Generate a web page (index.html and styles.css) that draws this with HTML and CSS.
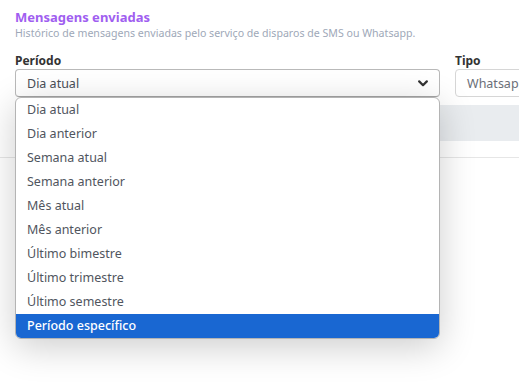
FILE: index.html
```html
<!DOCTYPE html>
<html lang="pt-BR">
<head>
    <meta charset="UTF-8">
    <meta name="viewport" content="width=device-width, initial-scale=1.0">
    <title>Mensagens enviadas</title>
    <link rel="stylesheet" href="styles.css">
</head>
<body>
    <div class="page">
        <h1 class="title">Mensagens enviadas</h1>
        <p class="subtitle">Histórico de mensagens enviadas pelo serviço de disparos de SMS ou Whatsapp.</p>

        <div class="filters">
            <div class="field field-periodo">
                <label>Período</label>
                <div class="select">
                    <span>Dia atual</span>
                    <svg class="chevron" width="10" height="7" viewBox="0 0 10 7">
                        <path d="M1.2 1.4 L5 5.2 L8.8 1.4" fill="none" stroke="#333" stroke-width="2.2" stroke-linecap="round" stroke-linejoin="round"/>
                    </svg>
                </div>

                <ul class="dropdown">
                    <li>Dia atual</li>
                    <li>Dia anterior</li>
                    <li>Semana atual</li>
                    <li>Semana anterior</li>
                    <li>Mês atual</li>
                    <li>Mês anterior</li>
                    <li>Último bimestre</li>
                    <li>Último trimestre</li>
                    <li>Último semestre</li>
                    <li class="selected">Período específico</li>
                </ul>
            </div>

            <div class="field field-tipo">
                <label>Tipo</label>
                <div class="select">
                    <span>Whatsapp</span>
                </div>
            </div>
        </div>

        <div class="table">
            <div class="table-head"></div>
            <div class="table-row"></div>
        </div>
    </div>
</body>
</html>
```

FILE: styles.css
```css
html, body {
    height: 100%;
}
body {
    margin: 0;
    background: #ffffff;
    font-family: "Noto Sans", "Liberation Sans", sans-serif;
    overflow: hidden;
}
.page {
    padding: 9px 0 0 15px;
    min-height: 100%;
    box-sizing: border-box;
    overflow: hidden;
}
.title {
    margin: 0;
    font-size: 13px;
    font-weight: 700;
    color: #a05ef0;
    line-height: 17px;
}
.subtitle {
    margin: 0;
    font-size: 10.6px;
    color: #9ea8b8;
    line-height: 14px;
}
.filters {
    display: flex;
    gap: 15px;
    margin-top: 13px;
}
.field {
    position: relative;
}
.field label {
    display: block;
    font-size: 12px;
    font-weight: 700;
    color: #333;
    line-height: 16px;
}
.field-periodo .select {
    width: 401px;
}
.field-tipo .select {
    width: 120px;
}
.select {
    height: 26px;
    border: 1px solid #b9b9b9;
    border-bottom-color: #a5a5a5;
    border-radius: 4px;
    display: flex;
    align-items: center;
    justify-content: space-between;
    padding: 0 11px;
    font-size: 12.5px;
    color: #4a4f58;
}
.field-tipo .select {
    border-color: #d6d6d6;
    color: #6b6f78;
}
.dropdown {
    position: absolute;
    left: 0;
    top: 44px;
    width: 423px;
    margin: 0;
    padding: 0;
    list-style: none;
    background: #fff;
    border: 1px solid #b4b4b4;
    border-radius: 6px;
    box-shadow: 0 8px 36px rgba(0, 0, 0, 0.2);
    overflow: hidden;
    z-index: 2;
}
.dropdown li {
    height: 24px;
    line-height: 24px;
    padding-left: 11px;
    font-size: 12.5px;
    color: #50555e;
}
.dropdown li.selected {
    background: #1967d2;
    color: #fff;
    font-weight: 500;
}
.table {
    margin-top: 8px;
}
.table-head {
    height: 36px;
    background: #e9ecef;
}
.table-row {
    height: 16px;
    border-bottom: 1px solid #e6e6e6;
    margin-left: -15px;
}
```
